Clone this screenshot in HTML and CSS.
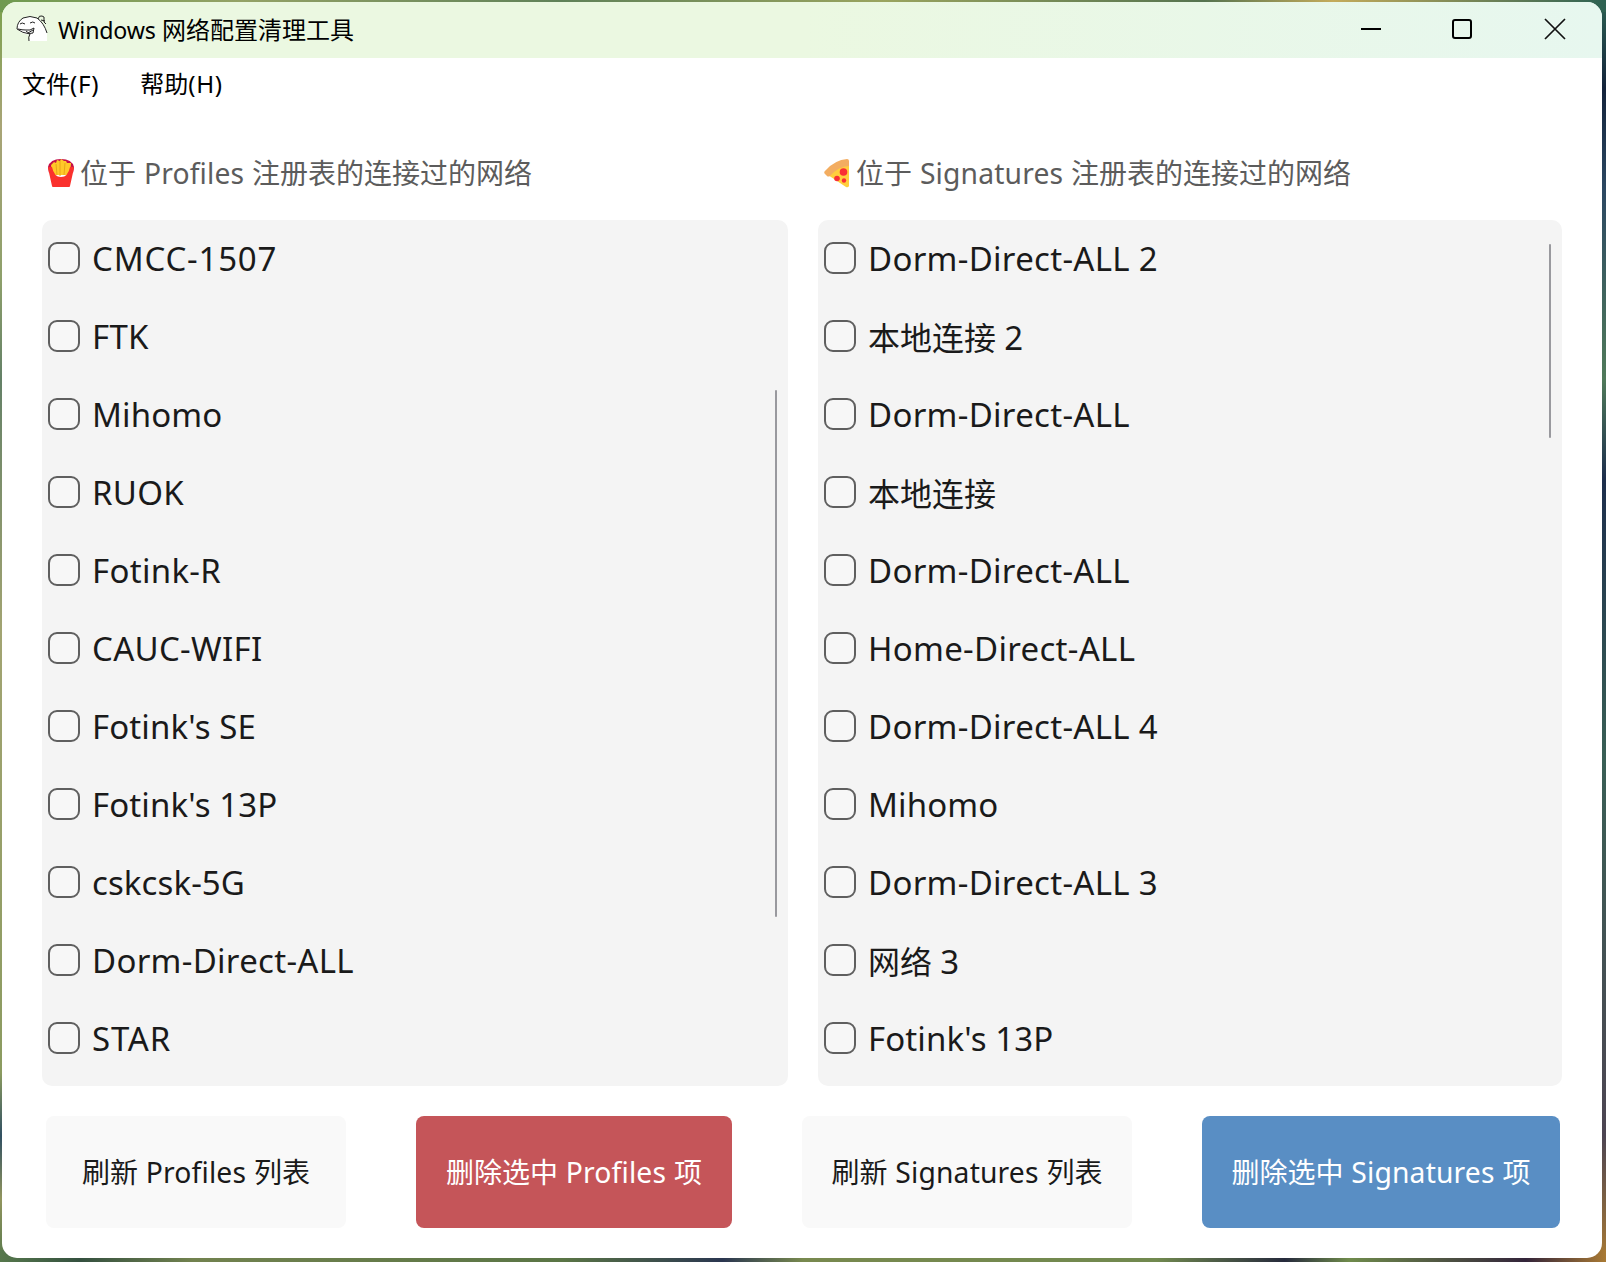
FILE: index.html
```
<!DOCTYPE html>
<html lang="zh-CN">
<head>
<meta charset="utf-8">
<title>Windows 网络配置清理工具</title>
<link rel="stylesheet" href="styles.css">
</head>
<body>
<div class="window">
  <header class="titlebar">
    <svg class="app-icon" viewBox="0 0 32 28"><path d="M13 26 14 20Q6 19 1 14Q1 8 6 4Q14-1 22 4Q28 8 31 17V26Z" fill="#fff"/><path d="M13 26Q12 22 14 19Q6 18 1 14Q1 7 7 3Q14 0 21 3Q28 8 31 18M22 4Q23 0 26 1L28 2 28 7 30 9M25 5 29 6M4 9Q6 7 9 9M14 8Q17 6 19 8M2 14Q6 15 10 15Q14 16 18 13L17 18Q13 20 10 16M12 18 17 15" fill="none" stroke="#222" stroke-width="1"/></svg>
    <h1 class="title"><span class="latin">Windows</span> 网络配置清理工具</h1>
    <div class="controls">
      <svg class="control" viewBox="0 0 22 22"><path d="M1 11H21" stroke="#000" stroke-width="2"/></svg>
      <svg class="control" viewBox="0 0 22 22"><rect x="1" y="2" width="18" height="18" rx="2" fill="none" stroke="#000" stroke-width="2"/></svg>
      <svg class="control" viewBox="0 0 22 22"><path d="M1 1 21 21M21 1 1 21" stroke="#111" stroke-width="1.7"/></svg>
    </div>
  </header>
  <nav class="menu"><span>文件<span class="latin">(F)</span></span><span>帮助<span class="latin">(H)</span></span></nav>
  <main class="columns">
    <section class="column">
      <h2 class="heading"><svg class="emoji" viewBox="1 0 28 30"><path d="M1 9Q3 1 14 1Q25 1 27 9L26 15H2Z" fill="#c50f48"/><path d="M4 7 7 4 9 5 10 2 13 3 14 1 17 3 19 3 20 5 24 5 23 17H5Z" fill="#ffc928"/><path d="M9 6 10 17M13 3V18M18 5 17 17" stroke="#e9a51b" fill="none"/><path d="M1 10Q2 8 5 9Q7 19 14 19Q21 19 23 9Q26 8 27 10L23 28Q23 29 22 29H6Q5 29 5 28Z" fill="#fa312d"/></svg>位于 <span class="latin">Profiles</span> 注册表的连接过的网络</h2>
      <div class="panel">
        <ul class="list">
          <li class="row"><i class="check"></i><span class="latin caps">CMCC-1507</span></li>
          <li class="row"><i class="check"></i><span class="latin">FTK</span></li>
          <li class="row"><i class="check"></i><span class="latin tight">Mihomo</span></li>
          <li class="row"><i class="check"></i><span class="latin">RUOK</span></li>
          <li class="row"><i class="check"></i><span class="latin">Fotink-R</span></li>
          <li class="row"><i class="check"></i><span class="latin">CAUC-WIFI</span></li>
          <li class="row"><i class="check"></i><span class="latin tight">Fotink's SE</span></li>
          <li class="row"><i class="check"></i><span class="latin tight">Fotink's 13P</span></li>
          <li class="row"><i class="check"></i><span class="latin tight">cskcsk-5G</span></li>
          <li class="row"><i class="check"></i><span class="latin">Dorm-Direct-ALL</span></li>
          <li class="row"><i class="check"></i><span class="latin caps">STAR</span></li>
        </ul>
        <div class="thumb thumb-profiles"></div>
      </div>
    </section>
    <section class="column">
      <h2 class="heading"><svg class="emoji" viewBox="0 0 28 30"><path d="M5 14Q13 5 25 6V28Q24 30 22 29L4 17Z" fill="#ffce3d"/><path d="M1 16Q-1 14 2 12Q11 2 23 1Q25 1 25 3V8Q15 8 6 18Q4 19 3 18Z" fill="#f3ad61"/><circle cx="19.500" cy="14" r="3.800" fill="#f92f35"/><circle cx="13" cy="20.500" r="2.800" fill="#f92f35"/><circle cx="20" cy="22.500" r="2.200" fill="#f92f35"/></svg>位于 <span class="latin">Signatures</span> 注册表的连接过的网络</h2>
      <div class="panel">
        <ul class="list">
          <li class="row"><i class="check"></i><span class="latin">Dorm-Direct-ALL 2</span></li>
          <li class="row"><i class="check"></i><span class="cjk">本地连接 <span class="latin">2</span></span></li>
          <li class="row"><i class="check"></i><span class="latin">Dorm-Direct-ALL</span></li>
          <li class="row"><i class="check"></i><span class="cjk">本地连接</span></li>
          <li class="row"><i class="check"></i><span class="latin">Dorm-Direct-ALL</span></li>
          <li class="row"><i class="check"></i><span class="latin">Home-Direct-ALL</span></li>
          <li class="row"><i class="check"></i><span class="latin">Dorm-Direct-ALL 4</span></li>
          <li class="row"><i class="check"></i><span class="latin tight">Mihomo</span></li>
          <li class="row"><i class="check"></i><span class="latin">Dorm-Direct-ALL 3</span></li>
          <li class="row"><i class="check"></i><span class="cjk">网络 <span class="latin">3</span></span></li>
          <li class="row"><i class="check"></i><span class="latin tight">Fotink's 13P</span></li>
        </ul>
        <div class="thumb thumb-signatures"></div>
      </div>
    </section>
  </main>
  <footer class="actions">
    <button class="btn btn-refresh-profiles">刷新 <span class="latin">Profiles</span> 列表</button>
    <button class="btn btn-delete-profiles">删除选中 <span class="latin">Profiles</span> 项</button>
    <button class="btn btn-refresh-signatures">刷新 <span class="latin">Signatures</span> 列表</button>
    <button class="btn btn-delete-signatures">删除选中 <span class="latin">Signatures</span> 项</button>
  </footer>
</div>
</body>
</html>
```
FILE: styles.css
```
* { box-sizing: border-box; }
body {
  margin: 0;
  padding: 2px 4px 4px 2px;
  width: 1606px;
  height: 1262px;
  overflow: hidden;
  font-family: "Noto Sans", "Noto Sans CJK SC", sans-serif;
  background:
    linear-gradient(90deg, #6f9a50, #94a266 15%, #5f8158 35%, #9aa45f 55%, #55734f 75%, #c4ab5b 83%, #2d6152) 0 0 / 100% 12px no-repeat,
    linear-gradient(90deg, #56784c, #34503f 5%, #72824f 12%, #5a7545 35%, #2a3650 45%, #78894f 50%, #71894f 72%, #262a3c 80%, #6f8b4c 84%, #33243a 95%, #a97a34) 0 100% / 100% 12px no-repeat,
    linear-gradient(180deg, #2d6152, #13233b 7%, #2c4862 15%, #507a5a 30%, #1d2e4c 38%, #395f55 60%, #4d4552 90%, #a97a34) 100% 0 / 12px 100% no-repeat,
    linear-gradient(180deg, #79a04c, #a9a577 10%, #8ea06b 22%, #648167 30%, #a2a472 50%, #8b9b60 85%, #315062 90%, #91955e 95%, #56784c) 0 0 / 12px 100% no-repeat;
}
.window {
  width: 1600px;
  height: 1256px;
  display: flex;
  flex-direction: column;
  background: #fff;
  border-radius: 15px;
  overflow: hidden;
}
.latin { font-size: 1.01em; letter-spacing: .15px; }
.titlebar {
  height: 56px;
  flex: none;
  display: flex;
  align-items: center;
  padding: 0 36px 2px 14px;
  background: linear-gradient(90deg, #ebf8e1, #ebf8e1 50%, #e7f7ef);
}
.app-icon { width: 32px; height: 28px; }
.title {
  margin: 0 auto 0 10px;
  padding-top: 1px;
  font-size: 24px;
  line-height: 36px;
  font-weight: 400;
  color: #000;
}
.title .latin { font-size: 23.2px; letter-spacing: -.2px; }
.controls { display: flex; gap: 70px; }
.control { width: 22px; height: 22px; }
.menu {
  height: 52px;
  flex: none;
  display: flex;
  align-items: center;
  gap: 41px;
  padding-left: 20px;
  font-size: 24px;
  line-height: 36px;
}
.menu .latin { letter-spacing: .7px; }
.columns {
  display: grid;
  grid-template-columns: 746px 744px;
  gap: 30px;
  padding: 37px 40px 0;
}
.heading {
  display: flex;
  align-items: center;
  height: 52px;
  margin: 0 0 21px;
  padding-left: 6px;
  white-space: pre;
  font-size: 28px;
  line-height: 42px;
  font-weight: 400;
  color: #5c5c5c;
  word-spacing: .6px;
}
.emoji { width: 28px; height: 30px; margin-right: 4px; }
.panel {
  position: relative;
  height: 866px;
  border-radius: 10px;
  background: #f4f4f4;
  overflow: hidden;
}
.list { list-style: none; margin: 0; padding: 0 6px; }
.row {
  display: flex;
  align-items: center;
  gap: 12px;
  height: 78px;
  padding-bottom: 2px;
  font-size: 32px;
  line-height: 48px;
  color: #1a1a1a;
}
.row .latin { font-size: 33px; letter-spacing: .3px; }
.row > .latin { padding-top: 2px; }
.row .caps { letter-spacing: .8px; }
.row .tight { letter-spacing: .1px; }
.cjk { padding-top: 3px; }
.check {
  width: 32px;
  height: 32px;
  border: 2px solid #5f5f5f;
  border-radius: 9px;
  background: #f7f7f7;
}
.thumb {
  position: absolute;
  right: 11px;
  width: 2px;
  border-radius: 1px;
  background: #99999e;
}
.thumb-profiles { top: 170px; height: 527px; }
.thumb-signatures { top: 24px; height: 194px; }
.actions { display: flex; gap: 70px; padding: 30px 42px 0 44px; }
.btn {
  height: 112px;
  padding: 0;
  border: 0;
  border-radius: 8px;
  background: #f9f9f9;
  color: #1a1a1a;
  font: 28px/42px "Noto Sans", "Noto Sans CJK SC", sans-serif;
  white-space: nowrap;
  word-spacing: .6px;
}
.btn-refresh-profiles { width: 300px; }
.btn-delete-profiles { width: 316px; background: #c55559; color: #fff; }
.btn-refresh-signatures { width: 330px; }
.btn-delete-signatures { width: 358px; background: #598ec4; color: #fff; }
```
